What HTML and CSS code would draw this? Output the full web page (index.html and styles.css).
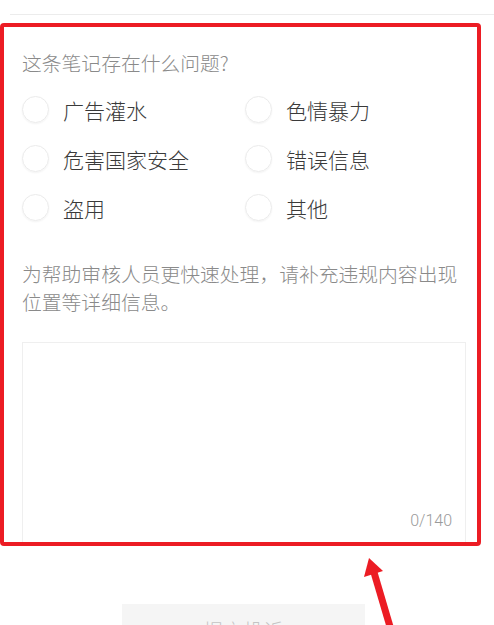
FILE: index.html
```html
<!DOCTYPE html>
<html lang="zh-CN">
<head>
<meta charset="utf-8">
<title>举报笔记</title>
<link rel="stylesheet" href="styles.css">
</head>
<body>
<div class="topbar"></div>
<section class="report">
  <p class="question">这条笔记存在什么问题?</p>
  <div class="options">
    <label class="option"><span class="radio"></span><span class="label">广告灌水</span></label>
    <label class="option"><span class="radio"></span><span class="label">色情暴力</span></label>
    <label class="option"><span class="radio"></span><span class="label">危害国家安全</span></label>
    <label class="option"><span class="radio"></span><span class="label">错误信息</span></label>
    <label class="option"><span class="radio"></span><span class="label">盗用</span></label>
    <label class="option"><span class="radio"></span><span class="label">其他</span></label>
  </div>
  <p class="hint">为帮助审核人员更快速处理，请补充违规内容出现位置等详细信息。</p>
  <div class="textbox">
    <span class="counter">0/140</span>
  </div>
</section>
<div class="submit">提交投诉</div>
<svg class="arrow" width="494" height="625" viewBox="0 0 494 625" aria-hidden="true">
  <line x1="373" y1="569" x2="391" y2="630" stroke="#ec1c24" stroke-width="7"/>
  <polygon points="369,558 364,577 383,571" fill="#ec1c24"/>
</svg>
</body>
</html>
```
FILE: styles.css
```css
html, body {
  margin: 0;
  padding: 0;
  background: #ffffff;
}
body {
  position: relative;
  width: 494px;
  height: 625px;
  overflow: hidden;
  font-family: "Noto Sans CJK SC", "Noto Sans", sans-serif;
  font-weight: 300;
}
.topbar {
  height: 14px;
  margin-left: 10px;
  border-bottom: 1px solid #ececec;
}
.report {
  box-sizing: border-box;
  width: 481px;
  height: 523px;
  margin-top: 8px;
  border: 4px solid #ec1c24;
  border-radius: 4px;
  padding: 22px 11px 0 18px;
  display: flex;
  flex-direction: column;
}
.question {
  margin: 0;
  font-size: 19.8px;
  line-height: 28px;
  color: #8a8a8a;
}
.options {
  margin-top: 8px;
  display: grid;
  grid-template-columns: 223px 1fr;
  grid-auto-rows: 49px;
}
.option {
  display: flex;
  align-items: center;
  gap: 14px;
}
.radio {
  box-sizing: border-box;
  width: 27px;
  height: 27px;
  border-radius: 50%;
  border: 1px solid #ebebeb;
  box-shadow: 0 1px 2px rgba(0, 0, 0, 0.05);
  flex: none;
}
.label {
  font-size: 21px;
  color: #3a3a3a;
  line-height: 28px;
}
.hint {
  margin: 28px 0 0;
  font-size: 19.8px;
  line-height: 28px;
  color: #8a8a8a;
}
.textbox {
  margin-top: 26px;
  flex: 1;
  border: 1px solid #efefef;
  border-bottom: none;
  display: flex;
  justify-content: flex-end;
  align-items: flex-end;
  padding: 0 13px 11px 0;
}
.counter {
  font-family: "Roboto", "Noto Sans", sans-serif;
  font-size: 16px;
  line-height: 20px;
  color: #9a9a9a;
}
.submit {
  width: 243px;
  height: 52px;
  margin: 58px 0 0 122px;
  background: #f5f5f5;
  color: #c4c4c4;
  font-size: 20px;
  display: flex;
  align-items: center;
  justify-content: center;
}
.arrow {
  position: absolute;
  left: 0;
  top: 0;
  pointer-events: none;
}
```
